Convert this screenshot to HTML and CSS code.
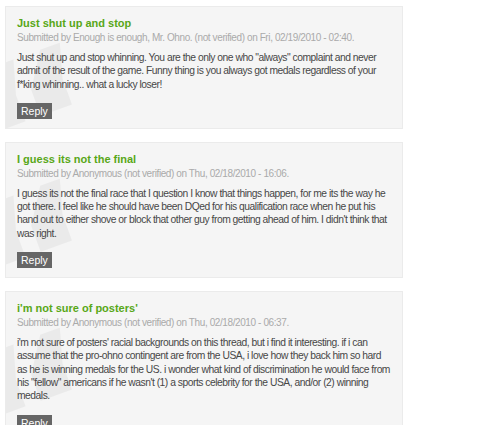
FILE: index.html
```html
<!DOCTYPE html>
<html lang="en">
<head>
  <meta charset="UTF-8" />
  <title>Comments</title>
  <link rel="stylesheet" href="styles.css">
</head>
<body>

<div class="comments">
  <div class="comment">
    <span class="quote">&ldquo;</span>
    <h3 class="title"><a href="#">Just shut up and stop</a></h3>
    <div class="submitted">Submitted by Enough is enough, Mr. Ohno. (not verified) on Fri, 02/19/2010 - 02:40.</div>
    <div class="content">Just shut up and stop whinning. You are the only one who "always" complaint and never admit of the result of the game. Funny thing is you always got medals regardless of your f*king whinning.. what a lucky loser!</div>
    <a class="reply" href="#">Reply</a>
  </div>

  <div class="comment">
    <span class="quote">&ldquo;</span>
    <h3 class="title"><a href="#">I guess its not the final</a></h3>
    <div class="submitted">Submitted by Anonymous (not verified) on Thu, 02/18/2010 - 16:06.</div>
    <div class="content">I guess its not the final race that I question I know that things happen, for me its the way he got there. I feel like he should have been DQed for his qualification race when he put his hand out to either shove or block that other guy from getting ahead of him. I didn't think that was right.</div>
    <a class="reply" href="#">Reply</a>
  </div>

  <div class="comment">
    <span class="quote">&ldquo;</span>
    <h3 class="title"><a href="#">i'm not sure of posters'</a></h3>
    <div class="submitted">Submitted by Anonymous (not verified) on Thu, 02/18/2010 - 06:37.</div>
    <div class="content">i'm not sure of posters' racial backgrounds on this thread, but i find it interesting. if i can assume that the pro-ohno contingent are from the USA, i love how they back him so hard as he is winning medals for the US. i wonder what kind of discrimination he would face from his "fellow" americans if he wasn't (1) a sports celebrity for the USA, and/or (2) winning medals.</div>
    <a class="reply" href="#">Reply</a>
  </div>
</div>

</body>
</html>
```

FILE: styles.css
```css
body {
  margin: 0;
  background: #fff;
  font-family: 'Liberation Sans', Arial, sans-serif;
  color: #474747;
}
.comments {
  width: 398px;
  padding: 6px 5px;
  display: flex;
  flex-direction: column;
  gap: 13px;
}
.comment {
  position: relative;
  overflow: hidden;
  background: #f5f5f5;
  border: 1px solid #ebebeb;
  padding: 8px 12px 9px 11px;
}
.quote {
  position: absolute;
  left: -30px;
  top: 24px;
  font-family: 'DejaVu Sans', sans-serif;
  font-weight: bold;
  font-size: 200px;
  line-height: 1;
  color: #eaeaea;
  transform: rotate(-20deg);
}
.title, .submitted, .content, .reply {
  position: relative;
}
.title {
  margin: 0;
  font-size: 11px;
  line-height: 16px;
  font-weight: bold;
}
.title a {
  color: #58a718;
  text-decoration: none;
}
.submitted {
  font-size: 10px;
  letter-spacing: -0.4px;
  line-height: 14px;
  color: #aaa;
}
.content {
  font-size: 10.3px;
  letter-spacing: -0.48px;
  line-height: 13.3px;
  margin-top: 6px;
}
.reply {
  display: inline-block;
  margin-top: 12px;
  background: #666;
  color: #fff;
  font-size: 10.5px;
  line-height: 16px;
  padding: 0 4px;
  text-decoration: none;
}
```
